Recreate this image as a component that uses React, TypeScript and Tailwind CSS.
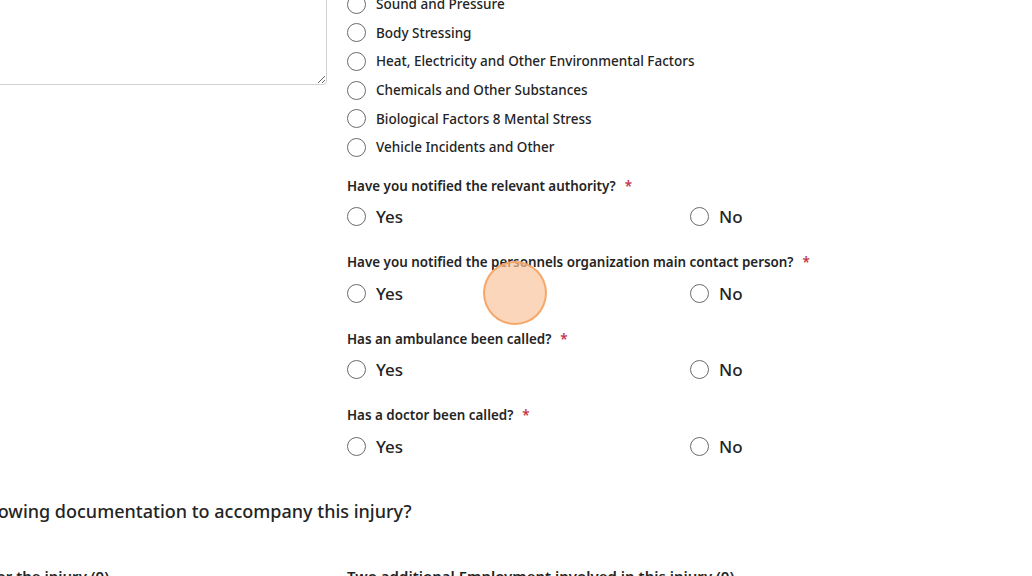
import React from 'react';

const hazards = [
  'Sound and Pressure',
  'Body Stressing',
  'Heat, Electricity and Other Environmental Factors',
  'Chemicals and Other Substances',
  'Biological Factors 8 Mental Stress',
  'Vehicle Incidents and Other',
];

const questions = [
  'Have you notified the relevant authority?',
  'Have you notified the personnels organization main contact person?',
  'Has an ambulance been called?',
  'Has a doctor been called?',
];

function Radio() {
  return <span className="block h-[19px] w-[19px] shrink-0 rounded-full border border-[#6b6b6b] bg-white" />;
}

function YesNo() {
  return (
    <div className="grid h-[30px] grid-cols-[343px_1fr] items-center">
      {['Yes', 'No'].map((label) => (
        <label key={label} className="flex items-center gap-[10px]">
          <Radio />
          <span className="text-[17px] font-medium leading-none text-[#242424]">{label}</span>
        </label>
      ))}
    </div>
  );
}

export default function App() {
  return (
    <div
      className="relative h-[576px] w-[1032px] overflow-hidden bg-white text-[#242424]"
      style={{ fontFamily: '"Noto Sans", "Open Sans", Arial, sans-serif' }}
    >
      <div className="-ml-[170px] -mt-[10px] flex flex-col">
        <div className="flex">
          <div className="w-[517px] shrink-0 pr-[20px]">
            <textarea className="-mt-px block h-[96px] w-full rounded-[4px] border border-[#d1d1d1] bg-white" />
          </div>
          <div className="flex flex-col">
            {hazards.map((h) => (
              <label key={h} className="flex h-[28.6px] items-center gap-[10px]">
                <Radio />
                <span className="text-[13.5px] font-medium text-[#242424]">{h}</span>
              </label>
            ))}
            <div className="mt-[14px] flex flex-col gap-[20.5px]">
              {questions.map((q) => (
                <div key={q} className="flex flex-col gap-[6px]">
                  <div className="flex h-[20px] items-center text-[13.4px] font-semibold">
                    {q}
                    <span className="ml-[9px] text-[#c4314b]">*</span>
                  </div>
                  <YesNo />
                </div>
              ))}
            </div>
          </div>
        </div>
        <h2 className="-ml-[4px] mt-[36px] text-[18px] font-medium leading-[28px] text-[#242424]">
          Do you have the following documentation to accompany this injury?
        </h2>
        <div className="mt-[40px] flex text-[15px] font-semibold leading-[22px]">
          <div className="w-[517px] shrink-0 pl-[12px]">Witness statements for the injury (0)</div>
          <div>Two additional Employment involved in this injury (0)</div>
        </div>
      </div>
      <div className="pointer-events-none absolute left-[483px] top-[261px] h-[64px] w-[64px] rounded-full border-2 border-[#f4a261]/90 bg-[#fbc59c]/70" />
    </div>
  );
}
